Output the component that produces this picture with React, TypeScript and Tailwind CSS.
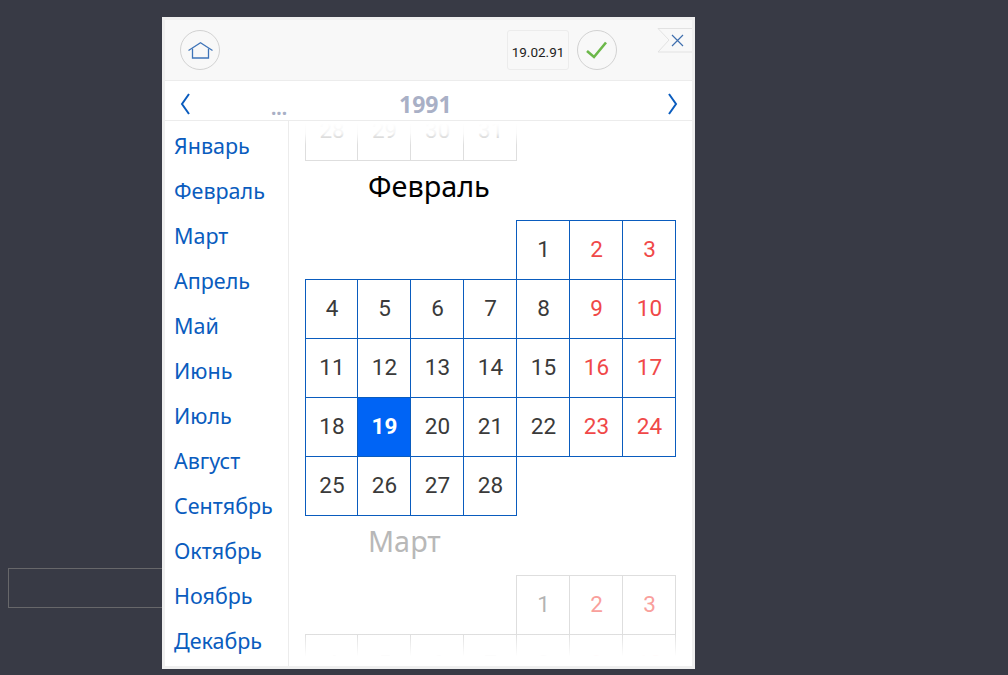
import React from 'react';

const MONTHS = ['Январь', 'Февраль', 'Март', 'Апрель', 'Май', 'Июнь', 'Июль', 'Август', 'Сентябрь', 'Октябрь', 'Ноябрь', 'Декабрь'];

type Day = number | null;

const JAN_TAIL: Day[][] = [[28, 29, 30, 31, null, null, null]];
const FEB: Day[][] = [
  [null, null, null, null, 1, 2, 3],
  [4, 5, 6, 7, 8, 9, 10],
  [11, 12, 13, 14, 15, 16, 17],
  [18, 19, 20, 21, 22, 23, 24],
  [25, 26, 27, 28, null, null, null],
];
const MAR: Day[][] = [
  [null, null, null, null, 1, 2, 3],
  [4, 5, 6, 7, 8, 9, 10],
];

function MonthTable({ weeks, active = false, selected }: { weeks: Day[][]; active?: boolean; selected?: number }) {
  return (
    <table className="w-[371px] table-fixed border-collapse">
      <tbody>
        {weeks.map((week, i) => (
          <tr key={i} className="h-[59px]">
            {week.map((day, j) => {
              if (day === null) return <td key={j} className={j === 0 ? 'w-[52px]' : 'w-[53px]'} />;
              const weekend = j >= 5;
              const isSelected = day === selected;
              let cls = active ? 'border-[#0a5cbe] text-[#3a3a3a]' : 'border-[#dedede] text-[#b4b4b4]';
              if (weekend) cls = active ? 'border-[#0a5cbe] text-[#f04848]' : 'border-[#dedede] text-[#f9a09c]';
              if (isSelected) cls = 'border-[#0a5cbe] bg-[#0064f5] text-white font-bold';
              return (
                <td key={j} className={`border p-0 pb-px pl-px text-center text-[22.5px] ${j === 0 ? 'w-[52px]' : 'w-[53px]'} ${cls}`}>
                  {day}
                </td>
              );
            })}
          </tr>
        ))}
      </tbody>
    </table>
  );
}

export default function App() {
  return (
    <div className="relative h-[675px] w-[1008px] overflow-hidden bg-[#383a45]">
      {/* поле за окном */}
      <div className="absolute left-2 top-[568px] h-10 w-[170px] border border-[#67676a]" />

      <div className="absolute left-[162px] top-[17px] flex h-[652px] w-[533px] flex-col border-[3px] border-[#efefef] bg-white">
        {/* шапка */}
        <div className="relative flex h-[61px] shrink-0 items-center border-b border-[#ececec] bg-[#f8f8f8] pl-[15px] pr-[75px]">
          <button className="flex h-10 w-10 items-center justify-center rounded-full border border-[#d2d2d2]">
            <svg width="25" height="17" viewBox="0 0 25 17" fill="none" strokeWidth="1.3" stroke="#3f74b8">
              <path d="M.5 8.5 L12.5 .8 L24.5 8.5" />
              <path d="M4.5 6.5 V16 H20.5 V6.5" />
            </svg>
          </button>
          <div className="ml-auto flex h-10 w-[62px] items-center justify-center rounded-[3px] border border-[#ececec] pt-1 text-[13.5px] text-[#222] [font-family:Roboto,sans-serif]">
            19.02.91
          </div>
          <button className="ml-2 flex h-10 w-10 items-center justify-center rounded-full border border-[#d2d2d2]">
            <svg width="22" height="18" viewBox="0 0 22 18" fill="none" strokeWidth="2.6" stroke="#6cb84a">
              <path d="M1 10 L8 16 L20 1.5" />
            </svg>
          </button>
          <div className="absolute right-0 top-[8px]">
            <svg width="35" height="25" viewBox="0 0 35 25" fill="none">
              <path d="M35 .5 H1 L12 12 L1 24 H35" stroke="#e2e2e2" />
              <path d="M15 7 L26 18 M26 7 L15 18" stroke="#3f6fae" strokeWidth="1.2" />
            </svg>
          </div>
        </div>

        {/* год */}
        <div className="relative flex h-10 shrink-0 items-center justify-between border-b border-[#ececec] pl-[15px] pr-[14px] pt-[6px]">
          <svg width="10" height="22" viewBox="0 0 10 22" fill="none" stroke="#0a5cbe" strokeWidth="2">
            <path d="M9 1 L2 11 L9 21" />
          </svg>
          <span className="absolute bottom-[4px] left-[106px] text-[19px] font-bold leading-4 text-[#a9b0c6]">...</span>
          <span className="absolute left-[234px] top-[7px] text-[23px] font-bold leading-8 text-[#a9b0c6]">1991</span>
          <svg width="10" height="22" viewBox="0 0 10 22" fill="none" stroke="#0a5cbe" strokeWidth="2">
            <path d="M1 1 L8 11 L1 21" />
          </svg>
        </div>

        <div className="flex min-h-0 flex-1">
          {/* месяцы */}
          <div className="flex w-[124px] shrink-0 flex-col border-r border-[#ececec] pl-[9px] pt-[2px]">
            {MONTHS.map((m) => (
              <div key={m} className="h-[45px] text-[21.5px] leading-[45px] text-[#0a5cbe]">
                {m}
              </div>
            ))}
          </div>

          {/* календарь */}
          <div className="relative min-w-0 flex-1 overflow-hidden pl-4 [font-family:Roboto,sans-serif]">
            <div className="-mt-5">
              <MonthTable weeks={JAN_TAIL} />
              <div className="flex h-[59px] items-center pb-[10px] pl-[63px] text-[28.8px] text-black [font-family:'Noto_Sans',sans-serif]">
                Февраль
              </div>
              <MonthTable weeks={FEB} active selected={19} />
              <div className="flex h-[59px] items-center pb-[10px] pl-[63px] text-[28.8px] text-[#b8b8b8] [font-family:'Noto_Sans',sans-serif]">
                Март
              </div>
              <MonthTable weeks={MAR} />
            </div>
            <div className="absolute inset-x-0 top-0 h-[24px] bg-gradient-to-b from-white from-[10%] via-white/85 via-[50%] to-transparent" />
            <div className="absolute inset-x-0 bottom-0 h-8 bg-gradient-to-t from-white from-[30%] to-transparent" />
          </div>
        </div>
      </div>
    </div>
  );
}
